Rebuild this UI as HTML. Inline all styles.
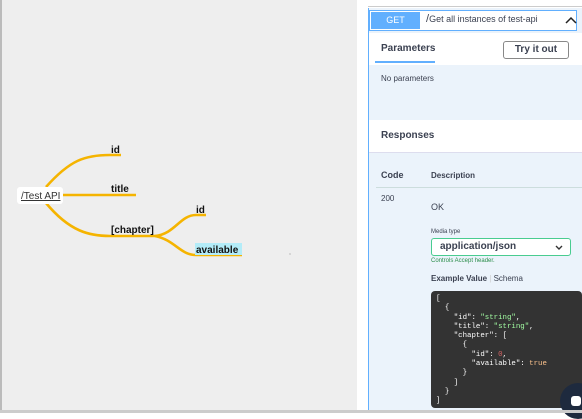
<!DOCTYPE html>
<html><head><style>
body{margin:0;width:582px;height:413px;overflow:hidden;font-family:"Liberation Sans",Arial,sans-serif;background:#fff;position:relative}
.a{position:absolute}
</style></head><body>
<div class="a" style="left:0;top:0;width:357px;height:413px;background:#eeeeee;border-left:2px solid #bbb;box-sizing:border-box"></div>
<svg class="a" style="left:0;top:0" width="357" height="413">
<g fill="none" stroke="#f5b400" stroke-width="2.6">
<path d="M46 187 C70 160,85 155,110 155 L121 155"/>
<path d="M63 195 L136 195"/>
<path d="M46 203 C70 232,90 236,110 236 L155 236"/>
<path d="M155 236 C175 234,180 215,196 215 L206 215"/>
<path d="M155 236 C175 240,180 255,196 255 L242 255"/>
</g>
<rect x="17" y="187" width="46" height="17" rx="3" fill="#fff"/>
<rect x="195" y="243" width="47" height="12" fill="#b3ecf8"/>
<g font-size="10" font-weight="bold" fill="#111">
<text x="111" y="153">id</text>
<text x="111" y="192">title</text>
<text x="111" y="233">[chapter]</text>
<text x="196" y="213">id</text>
<text x="196" y="253">available</text>
</g>
<text x="21" y="199" font-size="10" fill="#333" text-decoration="underline">/Test API</text>
<circle cx="290" cy="254" r="0.6" fill="#999"/>
</svg>
<div class="a" style="left:368px;top:6px;width:214px;height:1px;background:#ccc"></div>
<div class="a" style="left:368px;top:8px;width:214px;height:402px;background:#ebf3fb;border-left:1px solid #61affe"></div>
<div class="a" style="left:369px;top:10px;width:208px;height:21px;border:1px solid #61affe;background:#fff;box-sizing:border-box"></div>
<div class="a" style="left:371px;top:12px;width:49px;height:17px;background:#61affe;color:#fff;font-size:9px;text-align:center;line-height:17px">GET</div>
<div class="a" style="left:426px;top:13px;font-size:9px;color:#3b4151"><span style="font-size:11px">/</span>Get all instances of test-api</div>
<svg class="a" style="left:565px;top:16px" width="12" height="8"><path d="M1 7 L6 2 L11 7" fill="none" stroke="#222" stroke-width="1.5"/></svg>
<div class="a" style="left:369px;top:33px;width:213px;height:32px;background:#fff"></div>
<div class="a" style="left:381px;top:43px;font-size:10px;font-weight:bold;color:#3b4151">Parameters</div>
<div class="a" style="left:375px;top:61px;width:60px;height:2px;background:#61affe"></div>
<div class="a" style="left:503px;top:41px;width:66px;height:18px;border:1.5px solid #888;border-radius:3px;box-sizing:border-box;font-size:10px;font-weight:bold;text-align:center;line-height:15px;color:#3b4151">Try it out</div>
<div class="a" style="left:381px;top:74px;font-size:8px;color:#3b4151">No parameters</div>
<div class="a" style="left:369px;top:120px;width:213px;height:32px;background:#fff;border-bottom:1px solid #dde"></div>
<div class="a" style="left:381px;top:130px;font-size:10px;font-weight:bold;color:#3b4151">Responses</div>
<div class="a" style="left:381px;top:170px;font-size:9px;font-weight:bold;color:#3b4151">Code</div>
<div class="a" style="left:431px;top:171px;font-size:8px;font-weight:bold;color:#3b4151">Description</div>
<div class="a" style="left:376px;top:187px;width:206px;height:1px;background:#cdd"></div>
<div class="a" style="left:381px;top:194px;font-size:8px;color:#3b4151">200</div>
<div class="a" style="left:431px;top:202px;font-size:9px;color:#3b4151">OK</div>
<div class="a" style="left:431px;top:229px;font-size:6px;color:#3b4151">Media type</div>
<div class="a" style="left:431px;top:238px;width:140px;height:18px;border:1.5px solid #49cc90;border-radius:3px;background:#fff;box-sizing:border-box;font-size:10px;font-weight:bold;color:#3b4151;padding-left:8px;line-height:15px">application/json</div>
<svg class="a" style="left:555px;top:245px" width="8" height="5"><path d="M1 1 L4 4 L7 1" fill="none" stroke="#333" stroke-width="1.4"/></svg>
<div class="a" style="left:431px;top:258px;font-size:6px;color:#2a8c4a">Controls Accept header.</div>
<div class="a" style="left:431px;top:274px;font-size:8px;color:#3b4151"><b>Example Value</b> <span style="color:#ccc">|</span> Schema</div>
<div class="a" style="left:431px;top:291px;width:151px;height:117px;background:#333;border-radius:4px"></div>
<pre class="a" style="left:436px;top:295px;margin:0;font-family:'Liberation Mono',monospace;font-size:7.4px;line-height:9.3px;color:#fff">[
  {
    "id": <span style="color:#a2fca2">"string"</span>,
    "title": <span style="color:#a2fca2">"string"</span>,
    "chapter": [
      {
        "id": <span style="color:#d36363">0</span>,
        "available": <span style="color:#fcc28c">true</span>
      }
    ]
  }
]</pre>
<div class="a" style="left:560px;top:383px;width:36px;height:36px;border-radius:50%;background:#1e2a3e"></div>
<div class="a" style="left:571px;top:396px;width:10px;height:10px;border-radius:3px;background:#fff"></div>
<div class="a" style="left:0;top:410px;width:582px;height:3px;background:#ccc"></div>
</body></html>
